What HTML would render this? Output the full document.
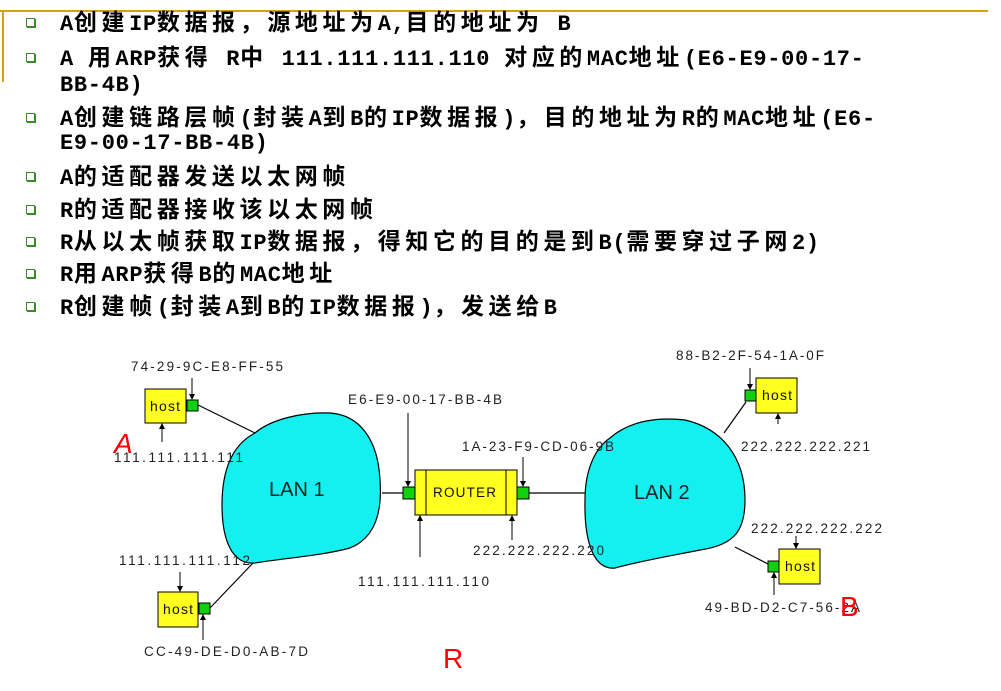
<!DOCTYPE html>
<html><head><meta charset="utf-8"><style>
body{margin:0;width:1001px;height:691px;background:#fff;position:relative;overflow:hidden}
.ln{position:absolute;left:60px;white-space:nowrap;font:bold 23px "Noto Sans CJK SC","WenQuanYi Zen Hei",sans-serif;letter-spacing:4.6px;color:#000;line-height:28px}
.m{font-family:"Liberation Mono",monospace;font-size:22px;letter-spacing:0.7px}
.b{position:absolute;left:26px;width:7px;height:7px;border:1px solid #3a8a2a;background:#fff;box-shadow:1px 1px 0 #3a8a2a}
</style></head><body>
<div style="position:absolute;left:0;top:10px;width:988px;height:2px;background:#d4a010"></div>
<div style="position:absolute;left:2px;top:10px;width:2px;height:72px;background:#d4a010"></div>

<div class="b" style="top:18px"></div>
<div class="ln" style="top:6px"><span class="m">A</span>创建<span class="m">IP</span>数据报，源地址为<span class="m">A,</span>目的地址为<span class="m"> B</span></div>
<div class="b" style="top:53px"></div>
<div class="ln" style="top:41px"><span class="m">A </span>用<span class="m">ARP</span>获得<span class="m"> R</span>中<span class="m"> 111.111.111.110 </span>对应的<span class="m">MAC</span>地址<span class="m">(E6-E9-00-17-</span></div>
<div class="ln" style="top:67px"><span class="m">BB-4B)</span></div>
<div class="b" style="top:113px"></div>
<div class="ln" style="top:101px"><span class="m">A</span>创建链路层帧<span class="m">(</span>封装<span class="m">A</span>到<span class="m">B</span>的<span class="m">IP</span>数据报<span class="m">)</span>，目的地址为<span class="m">R</span>的<span class="m">MAC</span>地址<span class="m">(E6-</span></div>
<div class="ln" style="top:125px"><span class="m">E9-00-17-BB-4B)</span></div>
<div class="b" style="top:172px"></div>
<div class="ln" style="top:160px"><span class="m">A</span>的适配器发送以太网帧</div>
<div class="b" style="top:205px"></div>
<div class="ln" style="top:193px"><span class="m">R</span>的适配器接收该以太网帧</div>
<div class="b" style="top:237px"></div>
<div class="ln" style="top:225px"><span class="m">R</span>从以太帧获取<span class="m">IP</span>数据报，得知它的目的是到<span class="m">B(</span>需要穿过子网<span class="m">2)</span></div>
<div class="b" style="top:269px"></div>
<div class="ln" style="top:257px"><span class="m">R</span>用<span class="m">ARP</span>获得<span class="m">B</span>的<span class="m">MAC</span>地址</div>
<div class="b" style="top:302px"></div>
<div class="ln" style="top:290px"><span class="m">R</span>创建帧<span class="m">(</span>封装<span class="m">A</span>到<span class="m">B</span>的<span class="m">IP</span>数据报<span class="m">)</span>，发送给<span class="m">B</span></div>

<svg width="1001" height="691" style="position:absolute;left:0;top:0" font-family="Liberation Sans,sans-serif">
<defs><marker id="ar" markerWidth="6" markerHeight="6" refX="5" refY="3" orient="auto"><path d="M0,0L6,3L0,6z" fill="#000"/></marker></defs>
<g stroke="#000" stroke-width="1.2" fill="none">
<line x1="198" y1="405" x2="255" y2="433"/>
<line x1="210" y1="608" x2="253" y2="563"/>
<line x1="382" y1="493" x2="403" y2="493"/>
<line x1="529" y1="493" x2="585" y2="493"/>
<line x1="746" y1="402" x2="724" y2="433"/>
<line x1="735" y1="547" x2="768" y2="564"/>
</g>
<path d="M255,433 C270,420 300,412 330,413 C360,415 378,440 380,480 C383,520 370,540 350,548 C320,556 285,558 255,563 C232,565 222,540 222,505 C222,470 232,445 255,433Z" fill="#14f0f0" stroke="#000" stroke-width="1.2"/>
<path d="M610,438 C630,420 660,417 685,420 C720,428 745,455 745,500 C745,530 735,545 700,550 C670,556 645,560 615,568 C595,570 584,545 585,500 C585,470 595,448 610,438Z" fill="#14f0f0" stroke="#000" stroke-width="1.2"/>
<g stroke="#000" stroke-width="1" fill="#ffff20">
<rect x="145" y="389" width="41" height="34"/>
<rect x="158" y="592" width="40" height="35"/>
<rect x="756" y="378" width="41" height="35"/>
<rect x="779" y="549" width="41" height="35"/>
<rect x="415" y="470" width="102" height="45"/>
</g>
<line x1="426" y1="470" x2="426" y2="515" stroke="#000"/>
<line x1="506" y1="470" x2="506" y2="515" stroke="#000"/>
<g font-size="14" letter-spacing="1.2" fill="#111">
<text x="150" y="411">host</text>
<text x="163" y="614">host</text>
<text x="762" y="400">host</text>
<text x="785" y="571">host</text>
<text x="433" y="497" font-size="13.5">ROUTER</text>
</g>
<g stroke="#000" stroke-width="1" fill="#10d010">
<rect x="187" y="400" width="11" height="11"/>
<rect x="199" y="603" width="11" height="11"/>
<rect x="745" y="390" width="11" height="11"/>
<rect x="768" y="561" width="11" height="11"/>
<rect x="403" y="487" width="12" height="12"/>
<rect x="517" y="487" width="12" height="12"/>
</g>
<g stroke="#000" stroke-width="1" marker-end="url(#ar)">
<line x1="192" y1="378" x2="192" y2="399"/>
<line x1="162" y1="442" x2="162" y2="424"/>
<line x1="180" y1="572" x2="180" y2="591"/>
<line x1="203" y1="640" x2="203" y2="615"/>
<line x1="750" y1="368" x2="750" y2="389"/>
<line x1="778" y1="424" x2="778" y2="414"/>
<line x1="796" y1="536" x2="796" y2="548"/>
<line x1="774" y1="595" x2="774" y2="573"/>
<line x1="408" y1="413" x2="408" y2="486"/>
<line x1="523" y1="457" x2="523" y2="486"/>
<line x1="420" y1="557" x2="420" y2="516"/>
<line x1="512" y1="540" x2="512" y2="516"/>
</g>
<g font-size="13.5" letter-spacing="2" fill="#222">
<text x="131" y="371" textLength="154">74-29-9C-E8-FF-55</text>
<text x="114" y="462" textLength="131">111.111.111.111</text>
<text x="348" y="404" textLength="156">E6-E9-00-17-BB-4B</text>
<text x="462" y="451" textLength="154">1A-23-F9-CD-06-9B</text>
<text x="473" y="555" textLength="133">222.222.222.220</text>
<text x="358" y="586" textLength="133">111.111.111.110</text>
<text x="119" y="565" textLength="133">111.111.111.112</text>
<text x="144" y="656" textLength="166">CC-49-DE-D0-AB-7D</text>
<text x="676" y="360" textLength="150">88-B2-2F-54-1A-0F</text>
<text x="741" y="451" textLength="131">222.222.222.221</text>
<text x="751" y="533" textLength="133">222.222.222.222</text>
<text x="705" y="612" textLength="157">49-BD-D2-C7-56-2A</text>
</g>
<text x="269" y="496" font-size="20" fill="#222">LAN 1</text>
<text x="634" y="499" font-size="20" fill="#222">LAN 2</text>
<g font-size="28" fill="#f00" font-family="Liberation Sans,sans-serif">
<text x="114" y="453" font-style="italic">A</text>
<text x="443" y="668">R</text>
<text x="840" y="616">B</text>
</g>
</svg>
</body></html>
